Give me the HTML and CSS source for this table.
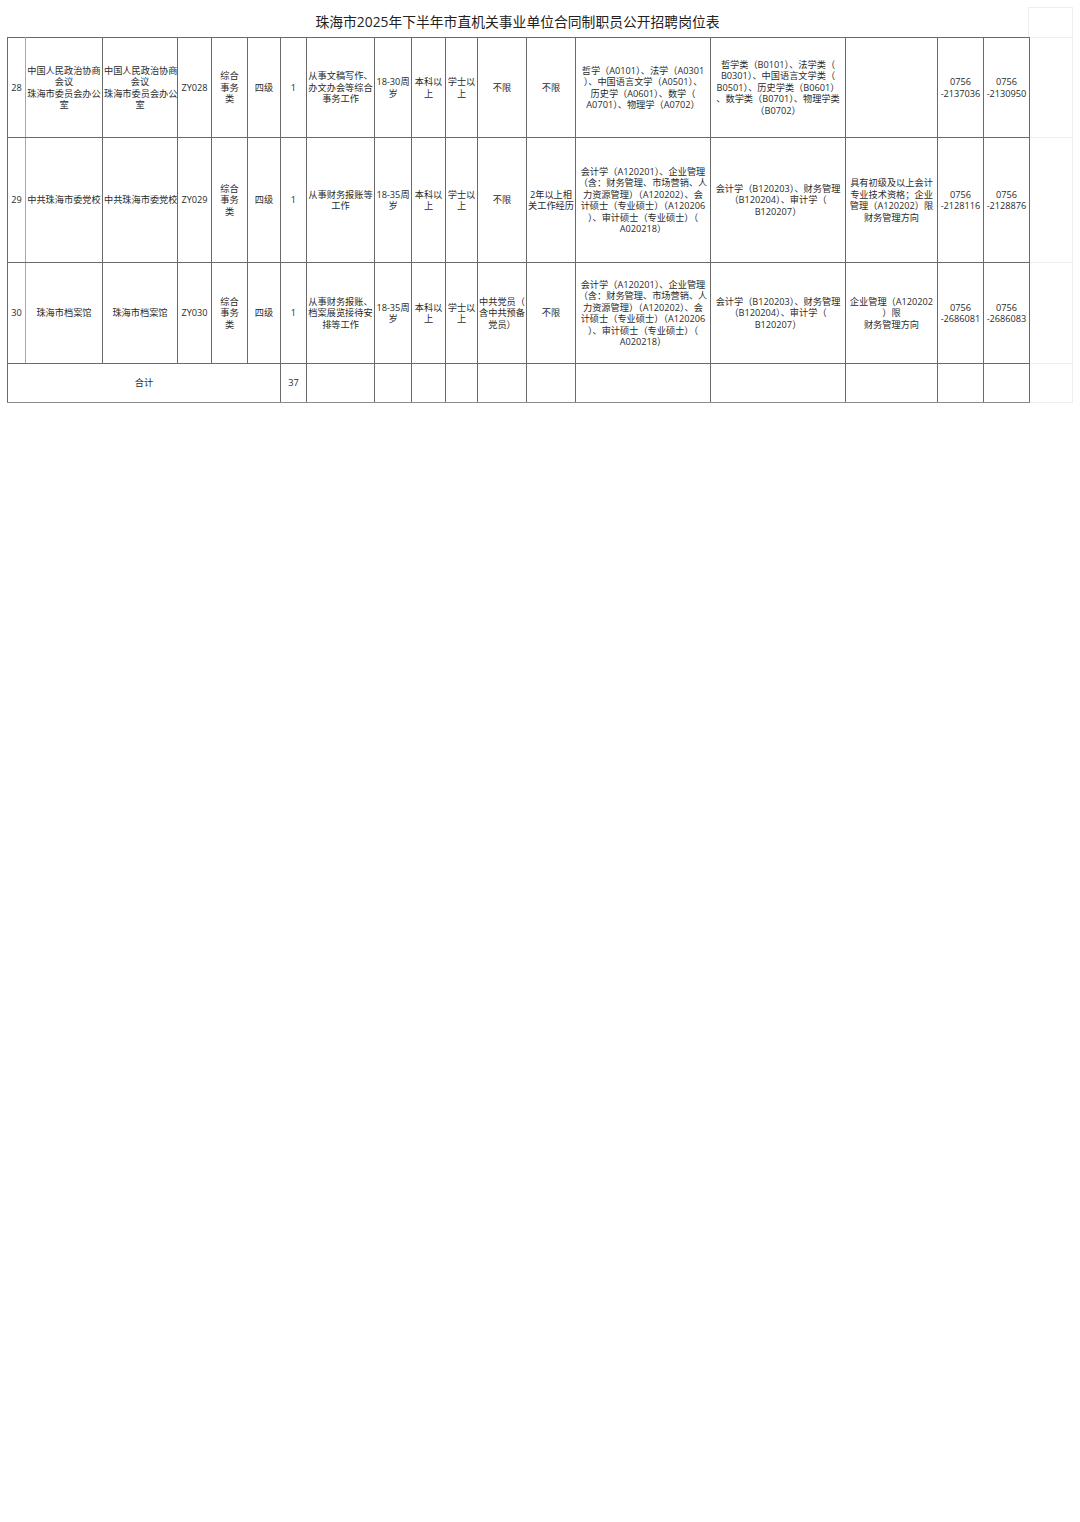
FILE: index.html
```html
<!DOCTYPE html>
<html lang="zh-CN">
<head>
<meta charset="utf-8">
<title>珠海市2025年下半年市直机关事业单位合同制职员公开招聘岗位表</title>
<link rel="stylesheet" href="styles.css">
</head>
<body>
<div class="page">
  <div class="title-row">
    <div class="title">珠海市2025年下半年市直机关事业单位合同制职员公开招聘岗位表</div>
    <div class="ghost-box"></div>
  </div>
  <table class="jobs">
    <colgroup>
      <col class="c1"><col class="c2"><col class="c3"><col class="c4"><col class="c5"><col class="c6"><col class="c7"><col class="c8"><col class="c9"><col class="c10"><col class="c11"><col class="c12"><col class="c13"><col class="c14"><col class="c15"><col class="c16"><col class="c17"><col class="c18"><col class="c19">
    </colgroup>
    <tbody>
      <tr class="r28">
        <td class="num">28</td>
        <td>中国人民政治协商<br>会议<br>珠海市委员会办公<br>室</td>
        <td>中国人民政治协商<br>会议<br>珠海市委员会办公<br>室</td>
        <td>ZY028</td>
        <td>综合<br>事务<br>类</td>
        <td>四级</td>
        <td>1</td>
        <td>从事文稿写作、<br>办文办会等综合<br>事务工作</td>
        <td>18-30周<br>岁</td>
        <td>本科以<br>上</td>
        <td>学士以<br>上</td>
        <td>不限</td>
        <td>不限</td>
        <td>哲学（A0101）、法学（A0301<br>）、中国语言文学（A0501）、<br>历史学（A0601）、数学（<br>A0701）、物理学（A0702）</td>
        <td>哲学类（B0101）、法学类（<br>B0301）、中国语言文学类（<br>B0501）、历史学类（B0601）<br>、数学类（B0701）、物理学类<br>（B0702）</td>
        <td></td>
        <td>0756<br>-2137036</td>
        <td>0756<br>-2130950</td>
        <td class="ghost"></td>
      </tr>
      <tr class="r29">
        <td class="num">29</td>
        <td>中共珠海市委党校</td>
        <td>中共珠海市委党校</td>
        <td>ZY029</td>
        <td>综合<br>事务<br>类</td>
        <td>四级</td>
        <td>1</td>
        <td>从事财务报账等<br>工作</td>
        <td>18-35周<br>岁</td>
        <td>本科以<br>上</td>
        <td>学士以<br>上</td>
        <td>不限</td>
        <td>2年以上相<br>关工作经历</td>
        <td>会计学（A120201）、企业管理<br>（含：财务管理、市场营销、人<br>力资源管理）（A120202）、会<br>计硕士（专业硕士）（A120206<br>）、审计硕士（专业硕士）（<br>A020218）</td>
        <td>会计学（B120203）、财务管理<br>（B120204）、审计学（<br>B120207）</td>
        <td>具有初级及以上会计<br>专业技术资格；企业<br>管理（A120202）限<br>财务管理方向</td>
        <td>0756<br>-2128116</td>
        <td>0756<br>-2128876</td>
        <td class="ghost"></td>
      </tr>
      <tr class="r30">
        <td class="num">30</td>
        <td>珠海市档案馆</td>
        <td>珠海市档案馆</td>
        <td>ZY030</td>
        <td>综合<br>事务<br>类</td>
        <td>四级</td>
        <td>1</td>
        <td>从事财务报账、<br>档案展览接待安<br>排等工作</td>
        <td>18-35周<br>岁</td>
        <td>本科以<br>上</td>
        <td>学士以<br>上</td>
        <td>中共党员（<br>含中共预备<br>党员）</td>
        <td>不限</td>
        <td>会计学（A120201）、企业管理<br>（含：财务管理、市场营销、人<br>力资源管理）（A120202）、会<br>计硕士（专业硕士）（A120206<br>）、审计硕士（专业硕士）（<br>A020218）</td>
        <td>会计学（B120203）、财务管理<br>（B120204）、审计学（<br>B120207）</td>
        <td>企业管理（A120202<br>）限<br>财务管理方向</td>
        <td>0756<br>-2686081</td>
        <td>0756<br>-2686083</td>
        <td class="ghost"></td>
      </tr>
      <tr class="total">
        <td colspan="6">合计</td>
        <td>37</td>
        <td></td><td></td><td></td><td></td><td></td><td></td><td></td><td></td><td></td><td></td><td></td>
        <td class="ghost"></td>
      </tr>
    </tbody>
  </table>
</div>
</body>
</html>
```

FILE: styles.css
```css
html, body {
  margin: 0;
  padding: 0;
  background: #ffffff;
}

body {
  font-family: "Open Sans", "Noto Sans CJK SC", sans-serif;
  color: #2b2b2b;
}

.page {
  padding: 7px 0 0 7px;
}

.title-row {
  display: flex;
  width: 1066px;
  height: 30px;
}

.title {
  width: 1022px;
  font-size: 13.8px;
  line-height: 30px;
  text-align: center;
  color: #222222;
}

.ghost-box {
  width: 43px;
  height: 29px;
  border: 1px solid #eeeeee;
  border-bottom: none;
}

.jobs {
  border-collapse: collapse;
  table-layout: fixed;
  width: 1066px;
  font-size: 9.2px;
  line-height: 11.5px;
}

.c1 { width: 18px; }
.c2 { width: 77px; }
.c3 { width: 75px; }
.c4 { width: 34px; }
.c5 { width: 36px; }
.c6 { width: 33px; }
.c7 { width: 26px; }
.c8 { width: 68px; }
.c9 { width: 37px; }
.c10 { width: 34px; }
.c11 { width: 32px; }
.c12 { width: 49px; }
.c13 { width: 49px; }
.c14 { width: 135px; }
.c15 { width: 135px; }
.c16 { width: 92px; }
.c17 { width: 46px; }
.c18 { width: 46px; }
.c19 { width: 43px; }

.jobs td {
  border: 1px solid #6a6a6a;
  padding: 0 1px;
  text-align: center;
  vertical-align: middle;
  white-space: nowrap;
  overflow: hidden;
}

.jobs td.num {
  border-right-color: #a8a8a8;
}

.jobs td.ghost {
  border: 1px solid #eeeeee;
  border-left: 1px solid #6a6a6a;
}

.r28 { height: 100px; }
.r29 { height: 125px; }
.r30 { height: 101px; }
.total { height: 39px; }

.jobs tr.total td {
  border-bottom-color: #8c8c8c;
}

.jobs tr.total td.ghost {
  border-bottom-color: #eeeeee;
}
```
